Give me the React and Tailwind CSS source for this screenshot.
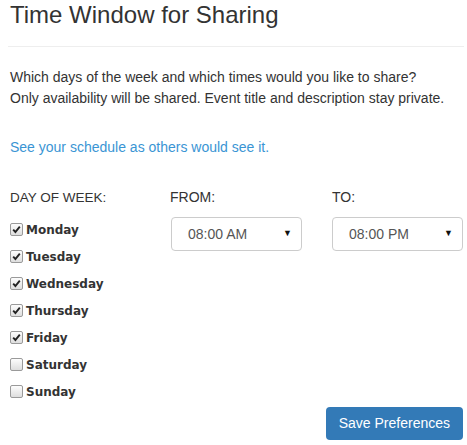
import React from 'react'

const DAYS = [
  { name: 'Monday', on: true },
  { name: 'Tuesday', on: true },
  { name: 'Wednesday', on: true },
  { name: 'Thursday', on: true },
  { name: 'Friday', on: true },
  { name: 'Saturday', on: false },
  { name: 'Sunday', on: false },
]

function Check({ on }) {
  return (
    <span className="flex h-[13px] w-[13px] items-center justify-center rounded-[2px] border border-[#9a9a9a] bg-gradient-to-b from-[#fdfdfd] to-[#dedede]">
      {on && (
        <svg width="9" height="9" viewBox="0 0 9 9">
          <path d="M1.2 4.6 L3.4 7 L7.8 1.6" fill="none" stroke="#222" strokeWidth="1.9" />
        </svg>
      )}
    </span>
  )
}

function TimeSelect({ value }) {
  return (
    <div className="flex h-[34px] w-[131px] items-center justify-between rounded-[4px] border border-[#cccccc] bg-white pl-[16px] pr-[9px] text-[14px] text-[#555]">
      <span>{value}</span>
      <span className="text-[9px] text-[#111]">▼</span>
    </div>
  )
}

export default function App() {
  return (
    <div className="bg-white px-[10px] text-[#333]" style={{ fontFamily: '"Liberation Sans", Arial, sans-serif' }}>
      <h2 className="pt-[1px] text-[24px] leading-[28px] font-normal">Time Window for Sharing</h2>
      <div className="mt-[17px] -ml-[2px] -mr-[7px] border-t border-[#eeeeee]" />

      <p className="mt-[20px] text-[14px] leading-[21px]">
        Which days of the week and which times would you like to share?
        <br />
        Only availability will be shared. Event title and description stay private.
      </p>

      <p className="mt-[28px] text-[14px] leading-[21px] text-[#3a95d4]">See your schedule as others would see it.</p>

      <div className="mt-[29px] -mr-[6px] flex">
        <div className="w-[160px] shrink-0">
          <div className="text-[13.5px] leading-[21px]">DAY OF WEEK:</div>
          <div className="mt-[8px] flex flex-col">
            {DAYS.map(d => (
              <div key={d.name} className="flex h-[27px] items-center gap-[3px]">
                <Check on={d.on} />
                <span className="text-[12px] font-bold text-[#333]" style={{ fontFamily: '"DejaVu Sans", Verdana, sans-serif' }}>{d.name}</span>
              </div>
            ))}
          </div>
        </div>
        <div className="w-[161px] shrink-0">
          <div className="text-[14px] leading-[21px]">FROM:</div>
          <div className="mt-[9px] ml-[1px]"><TimeSelect value="08:00 AM" /></div>
        </div>
        <div className="shrink-0">
          <div className="pl-[1px] text-[14px] leading-[21px]">TO:</div>
          <div className="mt-[9px] ml-[1px]"><TimeSelect value="08:00 PM" /></div>
        </div>
      </div>

      <div className="mt-[2px] -mr-[6px] flex justify-end pb-[5px]">
        <button className="h-[33px] rounded-[4px] bg-[#337ab7] px-[13px] text-[14px] text-white">Save Preferences</button>
      </div>
    </div>
  )
}
